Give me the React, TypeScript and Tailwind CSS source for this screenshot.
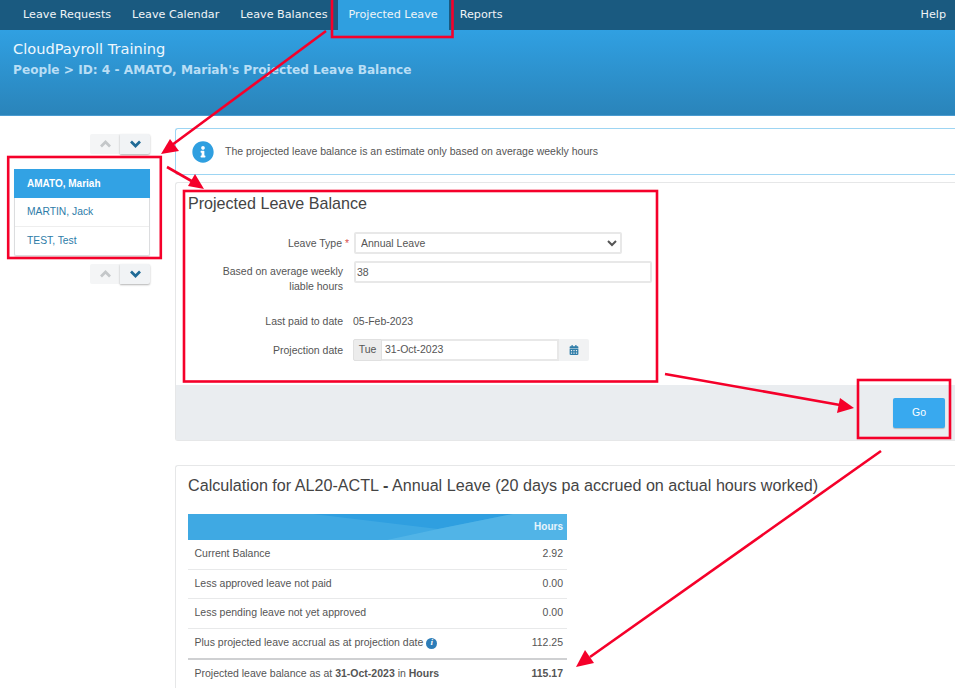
import React from "react";
import { FaInfoCircle, FaCalendarAlt } from "react-icons/fa";

function Chevron({ up }: { up?: boolean }) {
  return (
    <svg width="11" height="8" viewBox="0 0 11 8" fill="none" stroke="currentColor" strokeWidth="2.7">
      <polyline points={up ? "1,6.5 5.5,2 10,6.5" : "1,1.5 5.5,6 10,1.5"} />
    </svg>
  );
}

function Pager() {
  return (
    <div className="flex justify-end pr-[25px]">
      <div className="w-[30px] h-[20px] bg-[#f4f5f6] rounded-l-[2px] flex items-center justify-center text-[#c4c7c9]">
        <Chevron up />
      </div>
      <div className="w-[30px] h-[20px] bg-[#f1f3f5] rounded-r-[2px] flex items-center justify-center text-[#1f6a96] shadow-[0_1px_2px_rgba(0,0,0,0.3)]">
        <Chevron />
      </div>
    </div>
  );
}

const navItems = ["Leave Requests", "Leave Calendar", "Leave Balances"];

function Row({ label, value, extra, thick, last }: { label: React.ReactNode; value: string; extra?: boolean; thick?: boolean; last?: boolean }) {
  return (
    <div className={`flex items-center justify-between pl-[6.5px] pr-[4px] text-[10.5px] text-[#555] ${last ? "h-[28px]" : thick ? "h-[31px] border-b-[2px] border-[#cfd0d2]" : "h-[29.5px] border-b border-[#e8e9ea]"}`}>
      <span className="flex items-center gap-[3px]">
        {label}
        {extra && (
          <span className="w-[11px] h-[11px] rounded-full bg-[#2d7db8] text-white text-[9px] italic font-bold font-['Liberation_Serif',serif] flex items-center justify-center">i</span>
        )}
      </span>
      <span className={last ? "font-bold" : ""}>{value}</span>
    </div>
  );
}

export default function App() {
  return (
    <div className="relative w-[955px] h-[688px] overflow-hidden bg-white font-['Liberation_Sans',Arial,sans-serif] text-[#555]">
      <nav className="h-[30px] bg-[#1a5a80] flex items-center pl-[12.5px] pr-[9px] text-[11.2px] text-[#f0f4f7] font-['DejaVu_Sans',sans-serif]">
        {navItems.map((n) => (
          <a key={n} className="h-full flex items-center px-[10.5px] whitespace-nowrap">{n}</a>
        ))}
        <a className="h-full flex items-center pl-[10.5px] pr-[11.5px] bg-[#2f9fe0] whitespace-nowrap">Projected Leave</a>
        <a className="h-full flex items-center px-[10.5px] whitespace-nowrap">Reports</a>
        <a className="ml-auto">Help</a>
      </nav>

      <header className="h-[86px] bg-gradient-to-b from-[#30a0e2] to-[#2a84ba] border-b border-[#4a9bd0] pt-[10px] pl-[13px] font-['DejaVu_Sans',sans-serif]">
        <div className="text-[14.6px] leading-[17px] text-[#eef7fd]">CloudPayroll Training</div>
        <div className="text-[12.15px] leading-[14px] mt-[6px] font-bold text-[#b9def5]">People &gt; ID: 4 - AMATO, Mariah's Projected Leave Balance</div>
      </header>

      <div className="flex">
        <aside className="w-[175px] shrink-0 pt-[18px]">
          <Pager />
          <div className="mt-[15px] ml-[14px] w-[136px] h-[87px] rounded-[2px] border-x border-b border-[#dcdddf] shadow-[0_1px_1px_rgba(0,0,0,0.1)] text-[10.3px]">
            <div className="h-[29px] -mx-px bg-[#32a2e4] text-white font-bold text-[10px] pl-[13px] flex items-center">AMATO, Mariah</div>
            <div className="h-[29px] border-b border-[#eee] text-[#2d7ca8] pl-[12px] flex items-center">MARTIN, Jack</div>
            <div className="h-[28px] text-[#2d7ca8] pl-[12px] flex items-center">TEST, Test</div>
          </div>
          <div className="mt-[8px]"><Pager /></div>
        </aside>

        <main className="w-[780px] shrink-0 pt-[12px]">
          <div className="h-[47px] border border-r-0 border-[#9dd5f3] rounded-l-[3px] flex items-center pl-[16px] gap-[11px] text-[10.5px] text-[#555]">
            <FaInfoCircle size={22} className="text-[#2f9fe0]" />
            <span>The projected leave balance is an estimate only based on average weekly hours</span>
          </div>

          <section className="mt-[7px] h-[259px] border border-r-0 border-[#e6e7e8] rounded-l-[3px] flex flex-col">
            <div className="flex-1 pl-[12px] pt-[10px]">
              <h2 className="text-[16.1px] leading-[20px] text-[#444]">Projected Leave Balance</h2>
              <div className="mt-[19px] grid grid-cols-[155px_1fr] gap-x-[11px] text-[10.5px] items-start">
                <div className="text-right h-[22px] leading-[22px] whitespace-nowrap -mr-[6px]">Leave Type <span className="text-[#d9534f]">*</span></div>
                <select className="w-[268px] h-[22px] border-2 border-[#e8e8e8] rounded-[2px] bg-white pl-[1px] text-[10.5px] text-[#555]">
                  <option>Annual Leave</option>
                </select>
                <div className="mt-[10px] text-right leading-[15px] h-[45px]">Based on average weekly<br />liable hours</div>
                <input readOnly value="38" className="mt-[7px] w-[298px] h-[22px] border-2 border-[#e8e8e8] rounded-[2px] pl-[1px] text-[10.5px] text-[#555]" />
                <div className="text-right leading-[15px] mt-[5px]">Last paid to date</div>
                <div className="leading-[15px] mt-[5px] -ml-px">05-Feb-2023</div>
                <div className="mt-[10px] text-right leading-[22px]">Projection date</div>
                <div className="mt-[10px] -ml-px flex w-[236px] h-[22px]">
                  <span className="w-[29px] bg-[#ececec] border border-[#e0e0e0] rounded-l-[2px] flex items-center justify-center">Tue</span>
                  <span className="w-[177px] border-2 border-l-0 border-[#e8e8e8] pl-[3px] flex items-center">31-Oct-2023</span>
                  <span className="w-[30px] bg-[#f1f2f3] rounded-r-[2px] flex items-center justify-center text-[#2d7ca8]"><FaCalendarAlt size={10} /></span>
                </div>
              </div>
            </div>
            <div className="h-[55px] bg-[#eaedf0] flex items-center justify-end pr-[10px] shrink-0">
              <button className="w-[52px] h-[30px] bg-[#38a9ef] rounded-[2px] text-white text-[10.5px] shadow-[0_1px_1px_rgba(0,0,0,0.2)]">Go</button>
            </div>
          </section>

          <section className="mt-[24px] h-[240px] border border-r-0 border-[#e6e7e8] rounded-l-[3px] pl-[12px] pt-[9px]">
            <h2 className="text-[16.15px] leading-[20px] text-[#444] whitespace-nowrap">
              Calculation for AL20-ACTL <span className="font-bold">-</span> Annual Leave (20 days pa accrued on actual hours worked)
            </h2>
            <div className="mt-[19px] w-[379px]">
              <div className="relative h-[26px] bg-[#3fa9e3] overflow-hidden">
                <svg className="absolute inset-0" width="379" height="26" viewBox="0 0 379 26">
                  <polygon points="125,0 325,0 250,15" fill="#2f9fe0" />
                  <polygon points="199,26 379,26 379,0 325,0 250,15" fill="#55b6e7" opacity="0.85" />
                </svg>
                <span className="absolute right-[4px] top-0 leading-[26px] text-[10px] font-bold text-[#e8f5fc]">Hours</span>
              </div>
              <Row label="Current Balance" value="2.92" />
              <Row label="Less approved leave not paid" value="0.00" />
              <Row label="Less pending leave not yet approved" value="0.00" />
              <Row label="Plus projected leave accrual as at projection date" value="112.25" extra thick />
              <Row last label={<span>Projected leave balance as at <b>31-Oct-2023</b> in <b>Hours</b></span>} value="115.17" />
            </div>
          </section>
        </main>
      </div>

      <svg className="absolute inset-0 pointer-events-none" width="955" height="688" viewBox="0 0 955 688">
        <g fill="none" stroke="#f5002a" strokeWidth="2.6">
          <rect x="332" y="-4" width="120.5" height="41" />
          <rect x="8.2" y="157" width="152.6" height="101" />
          <rect x="184" y="191" width="473" height="190.5" />
          <rect x="858" y="380" width="92" height="58" />
          <line x1="326" y1="31" x2="172" y2="145" />
          <line x1="167" y1="167" x2="195" y2="183" />
          <line x1="665" y1="374" x2="840" y2="405" />
          <line x1="881" y1="451" x2="590" y2="657" />
        </g>
        <g fill="#f5002a">
          <polygon points="161,154 170,139 179,151" />
          <polygon points="204,189 188,186 195,174" />
          <polygon points="854,408 837,413 840,398" />
          <polygon points="576,667 585,650 594,663" />
        </g>
      </svg>
    </div>
  );
}
